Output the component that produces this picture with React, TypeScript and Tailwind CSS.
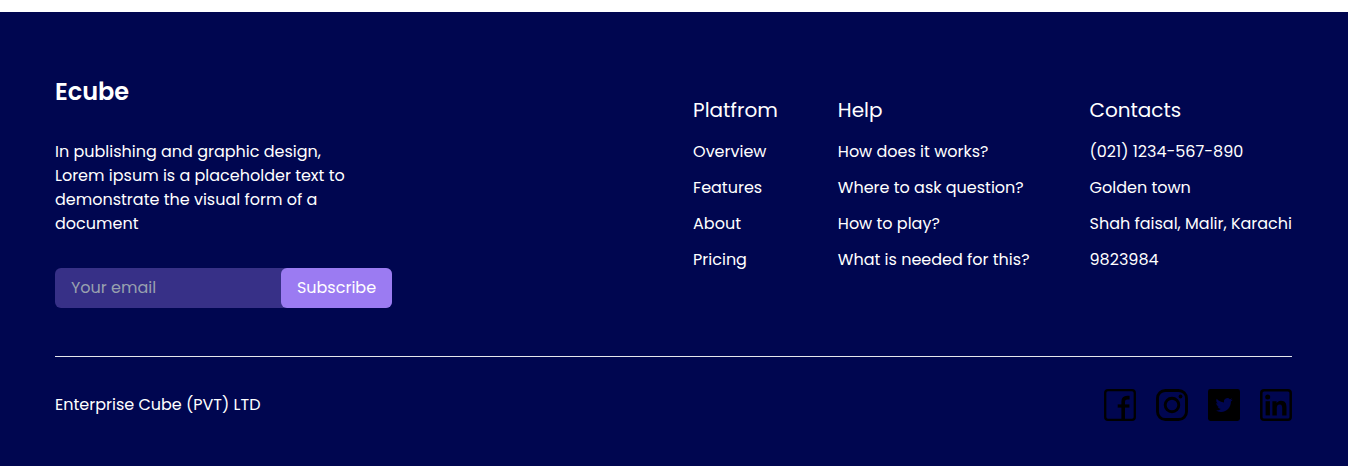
import React from "react";

const columns = [
  {
    title: "Platfrom",
    links: ["Overview", "Features", "About", "Pricing"],
  },
  {
    title: "Help",
    links: [
      "How does it works?",
      "Where to ask question?",
      "How to play?",
      "What is needed for this?",
    ],
  },
  {
    title: "Contacts",
    links: [
      "(021) 1234-567-890",
      "Golden town",
      "Shah faisal, Malir, Karachi",
      "9823984",
    ],
  },
];

const Facebook = () => (
  <svg viewBox="0 0 32 32" className="h-8 w-8" fill="none" stroke="currentColor">
    <rect x="1.2" y="1.2" width="29.6" height="29.6" rx="2.8" strokeWidth="2.3" />
    <path d="M19.2 31V12.6Q19.2 8.6 23.2 8.6H25.6" strokeWidth="3.6" />
    <path d="M13.7 17H25.4" strokeWidth="3.2" />
  </svg>
);

const Instagram = () => (
  <svg viewBox="0 0 32 32" className="h-8 w-8" fill="none" stroke="currentColor">
    <rect x="1.5" y="1.5" width="29" height="29" rx="7.8" strokeWidth="2.9" />
    <circle cx="16" cy="16" r="6.8" strokeWidth="2.9" />
    <circle cx="24.5" cy="7.5" r="1.9" fill="currentColor" stroke="none" />
  </svg>
);

const Twitter = () => (
  <svg viewBox="0 0 32 32" className="h-8 w-8">
    <rect width="32" height="32" rx="2.4" fill="currentColor" />
    <path
      transform="translate(7.6 7.5) scale(.71)"
      fill="#000650"
      d="M23.95 4.57a10 10 0 0 1-2.82.77 4.96 4.96 0 0 0 2.16-2.72c-.95.55-2 .96-3.13 1.18a4.92 4.92 0 0 0-8.38 4.48C7.69 8.1 4.07 6.13 1.64 3.16a4.82 4.82 0 0 0-.67 2.48c0 1.71.87 3.21 2.19 4.1a4.9 4.9 0 0 1-2.23-.62v.06a4.92 4.92 0 0 0 3.95 4.83 5 5 0 0 1-2.21.08 4.94 4.94 0 0 0 4.6 3.42A9.87 9.87 0 0 1 0 19.54a14 14 0 0 0 7.55 2.21c9.05 0 14-7.5 14-13.98 0-.21 0-.42-.02-.63a9.94 9.94 0 0 0 2.46-2.55z"
    />
  </svg>
);

const Linkedin = () => (
  <svg viewBox="0 0 32 32" className="h-8 w-8" fill="currentColor">
    <rect
      x="1.3"
      y="1.3"
      width="29.4"
      height="29.4"
      rx="2.8"
      fill="none"
      stroke="currentColor"
      strokeWidth="2.5"
    />
    <circle cx="7.7" cy="7.9" r="2.5" />
    <path d="M5.6 12.2h4.3v14.2H5.6z" />
    <path d="M12.4 12.2h4.2v2c.8-1.4 2.3-2.4 4.4-2.4 4.4 0 5.5 2.8 5.5 6.6v8h-4.3v-7.2c0-1.8-.2-3.7-2.5-3.7s-2.9 1.8-2.9 3.6v7.3h-4.4z" />
  </svg>
);

const socials = [
  { name: "Facebook", Icon: Facebook },
  { name: "Instagram", Icon: Instagram },
  { name: "Twitter", Icon: Twitter },
  { name: "LinkedIn", Icon: Linkedin },
];

const Footer = () => {
  return (
    <footer className="mt-3 bg-[#000650] pb-12 pl-[55px] pr-14 pt-16 font-['Poppins','Inter',sans-serif] text-base text-white">
      <div className="flex flex-wrap items-center justify-between gap-8">
        <div>
          <h2 className="text-2xl font-semibold">Ecube</h2>
          <p className="my-8 max-w-[300px]">
            In publishing and graphic design, Lorem ipsum is a placeholder text
            to demonstrate the visual form of a document
          </p>
          <form
            className="flex h-10 w-[337px] rounded-md bg-[#373087]"
            onSubmit={(e) => e.preventDefault()}
          >
            <input
              type="email"
              aria-label="Your email"
              placeholder="Your email"
              className="min-w-0 flex-1 bg-transparent px-4 outline-none placeholder:text-gray-400"
            />
            <button
              type="submit"
              className="w-[111px] rounded-md bg-[#9b7bf2] text-center"
            >
              Subscribe
            </button>
          </form>
        </div>

        <div className="flex flex-wrap gap-[60px] pb-1">
          {columns.map(({ title, links }) => (
            <div key={title}>
              <h3 className="mb-4 text-xl">{title}</h3>
              <ul>
                {links.map((link) => (
                  <li key={link} className="whitespace-nowrap pb-3">
                    <a href="#">{link}</a>
                  </li>
                ))}
              </ul>
            </div>
          ))}
        </div>
      </div>

      <div className="mt-12 flex items-center justify-between border-t border-gray-200 pt-8">
        <p>Enterprise Cube (PVT) LTD</p>
        <div className="flex gap-5 text-black">
          {socials.map(({ name, Icon }) => (
            <a key={name} href="#" aria-label={name}>
              <Icon />
            </a>
          ))}
        </div>
      </div>
    </footer>
  );
};

export default function App() {
  return <Footer />;
}
